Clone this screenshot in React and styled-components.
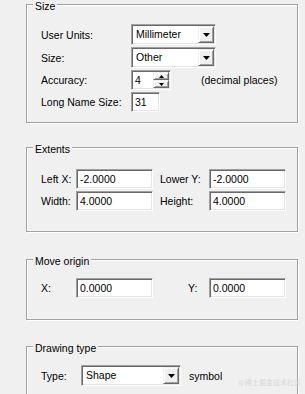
import React from 'react';
import styled, { createGlobalStyle } from 'styled-components';

const Global = createGlobalStyle`
  html, body {
    margin: 0;
    background: #f0f0f0;
  }
  body {
    font-family: "Liberation Sans", Arial, sans-serif;
    font-size: 10.5px;
    color: #000;
    overflow: hidden;
  }
`;

const Page = styled.div`
  position: relative;
  width: 305px;
  height: 394px;
  box-sizing: border-box;
  padding: 4px 0 0 26px;
  overflow: hidden;
`;

const Group = styled.section`
  display: flex;
  flex-direction: column;
  align-items: flex-start;
  box-sizing: border-box;
  width: 272px;
  height: ${p => p.$h}px;
  margin-top: ${p => p.$mt || 0}px;
  padding-left: 14px;
  border: 1px solid #a0a0a0;
  box-shadow: 1px 1px 0 #fff, inset 1px 1px 0 #fff;
`;

const Title = styled.div`
  margin: -5px 0 ${p => p.$gap}px -8px;
  padding: 0 2px;
  line-height: 13px;
  background: #f0f0f0;
`;

const Rows = styled.div`
  display: flex;
  flex-direction: column;
  gap: 2px;
`;

const Row = styled.div`
  display: flex;
  align-items: center;
  height: ${p => p.$h || 20}px;
`;

const Label = styled.span`
  flex: none;
  width: ${p => p.$w}px;
  margin-left: ${p => p.$ml || 0}px;
  white-space: nowrap;
`;

const Sunken = styled.div`
  display: flex;
  flex: none;
  box-sizing: border-box;
  width: ${p => p.$w}px;
  height: ${p => p.$h || 20}px;
  background: #fff;
  border: 1px solid;
  border-color: #a0a0a0 #fff #fff #a0a0a0;
  box-shadow: inset 1px 1px 0 #696969, inset -1px -1px 0 #e3e3e3;
`;

const Value = styled.span`
  flex: 1;
  padding: 1px 0 0 3px;
  line-height: 17px;
  white-space: nowrap;
`;

const SelectBox = styled(Sunken)`
  padding: 1px;
`;

const DropButton = styled.div`
  display: flex;
  align-items: center;
  justify-content: center;
  box-sizing: border-box;
  width: 16px;
  height: 100%;
  background: #f0f0f0;
  border: 1px solid;
  border-color: #f0f0f0 #696969 #696969 #f0f0f0;
  box-shadow: inset 1px 1px 0 #fff, inset -1px -1px 0 #a0a0a0;
`;

const SpinCol = styled.div`
  display: flex;
  flex-direction: column;
  width: 16px;
  padding: 1px 1px 1px 0;
`;

const SpinButton = styled(DropButton)`
  width: 16px;
  height: 50%;
`;

const Tail = styled.span`
  margin-left: ${p => p.$ml}px;
  white-space: nowrap;
`;

const Watermark = styled.span`
  position: absolute;
  right: 4px;
  bottom: 7px;
  font-family: "Noto Sans CJK SC", sans-serif;
  font-size: 7px;
  color: #d8d8d8;
`;

const Arrow = ({ up, small }) => {
  const w = small ? 5 : 7;
  const h = small ? 3 : 4;
  return (
    <svg width={w} height={h} viewBox={`0 0 ${w} ${h}`}>
      {up
        ? <polygon points={`0,${h} ${w},${h} ${w / 2},0`} fill="#000" />
        : <polygon points={`0,0 ${w},0 ${w / 2},${h}`} fill="#000" />}
    </svg>
  );
};

const Select = ({ w, children }) => (
  <SelectBox $w={w} $h={21}>
    <Value style={{ paddingTop: 0 }}>{children}</Value>
    <DropButton><Arrow /></DropButton>
  </SelectBox>
);

const Edit = ({ w, children }) => (
  <Sunken $w={w}><Value>{children}</Value></Sunken>
);

const Spin = ({ w, children }) => (
  <Sunken $w={w}>
    <Value>{children}</Value>
    <SpinCol>
      <SpinButton><Arrow up small /></SpinButton>
      <SpinButton><Arrow small /></SpinButton>
    </SpinCol>
  </Sunken>
);

export default function App() {
  return (
    <Page>
      <Global />
      <Group $h={119}>
        <Title $gap={11}>Size</Title>
        <Rows>
          <Row $h={21}>
            <Label $w={90}>User Units:</Label>
            <Select w={85}>Millimeter</Select>
          </Row>
          <Row $h={21}>
            <Label $w={90}>Size:</Label>
            <Select w={85}>Other</Select>
          </Row>
          <Row>
            <Label $w={90}>Accuracy:</Label>
            <Spin w={40}>4</Spin>
            <Tail $ml={30}>(decimal places)</Tail>
          </Row>
          <Row>
            <Label $w={90}>Long Name Size:</Label>
            <Edit w={29}>31</Edit>
          </Row>
        </Rows>
      </Group>

      <Group $h={85} $mt={24}>
        <Title $gap={13}>Extents</Title>
        <Rows>
          <Row>
            <Label $w={35}>Left X:</Label>
            <Edit w={77}>-2.0000</Edit>
            <Label $w={49} $ml={7}>Lower Y:</Label>
            <Edit w={77}>-2.0000</Edit>
          </Row>
          <Row>
            <Label $w={35}>Width:</Label>
            <Edit w={77}>4.0000</Edit>
            <Label $w={49} $ml={7}>Height:</Label>
            <Edit w={77}>4.0000</Edit>
          </Row>
        </Rows>
      </Group>

      <Group $h={61} $mt={27}>
        <Title $gap={10}>Move origin</Title>
        <Row>
          <Label $w={35}>X:</Label>
          <Edit w={77}>0.0000</Edit>
          <Label $w={21} $ml={35}>Y:</Label>
          <Edit w={77}>0.0000</Edit>
        </Row>
      </Group>

      <Group $h={70} $mt={26}>
        <Title $gap={10}>Drawing type</Title>
        <Row $h={21}>
          <Label $w={40}>Type:</Label>
          <Select w={100}>Shape</Select>
          <Tail $ml={8}>symbol</Tail>
        </Row>
      </Group>
      <Watermark>@稀土掘金技术社区</Watermark>
    </Page>
  );
}
